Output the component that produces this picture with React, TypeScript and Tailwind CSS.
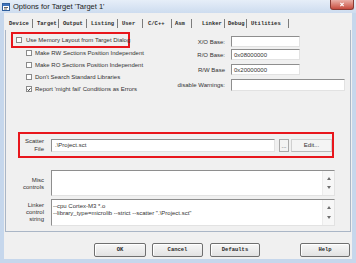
import React from 'react';

const tabs = [
  {label: 'Device', cls: 'w-[27px] pl-[3px]'},
  {label: 'Target', cls: 'w-[26px] pl-[4px]'},
  {label: 'Output', cls: 'w-[28px] pl-[4px]'},
  {label: 'Listing', cls: 'w-[31px] pl-[4px]'},
  {label: 'User', cls: 'w-[25px] pl-[4px]'},
  {label: 'C/C++', cls: 'w-[29px] pl-[5px]'},
  {label: 'Asm', cls: 'w-[20px] pl-[3px]'},
  {label: 'Linker', cls: 'w-[33px] pl-[10px]'},
  {label: 'Debug', cls: 'w-[22px] pl-[3px]'},
  {label: 'Utilities', cls: 'w-[42px] pl-[4px]'},
];

const sunken =
  'border border-t-[#8e8e8e] border-l-[#8e8e8e] border-r-[#e2e2e2] border-b-[#e2e2e2] bg-white';

function Check({checked}: {checked?: boolean}) {
  return (
    <span className="flex h-[6px] w-[6px] shrink-0 items-center justify-center border border-[#8a8a8a] bg-white">
      {checked && (
        <svg viewBox="0 0 6 6" className="h-[5px] w-[5px]">
          <path d="M0.8 3 L2.4 4.6 L5.2 1.2" stroke="#1a1a1a" strokeWidth="1.3" fill="none" />
        </svg>
      )}
    </span>
  );
}

function ScrollArrows() {
  return (
    <div className="flex w-[12px] shrink-0 flex-col items-center justify-between border-l border-[#ececec] bg-[#f7f7f7] py-[6px]">
      <svg viewBox="0 0 4 3" className="h-[3px] w-[4px]">
        <path d="M0 3 L2 0 L4 3 Z" fill="#6e6e6e" />
      </svg>
      <svg viewBox="0 0 4 3" className="h-[3px] w-[4px]">
        <path d="M0 0 L4 0 L2 3 Z" fill="#6e6e6e" />
      </svg>
    </div>
  );
}

function TitleBar() {
  return (
    <div className="flex h-[13px] shrink-0 items-start bg-gradient-to-b from-[#e6eef8] to-[#cddcef]">
      <svg viewBox="0 0 8 8" className="ml-[2px] mt-[3px] h-[8px] w-[8px]">
        <rect x="0.5" y="0.5" width="7" height="7" fill="#ffffff" stroke="#2f5f9e" />
        <rect x="1" y="1" width="6" height="2" fill="#3f74bd" />
        <path d="M2 4.5 H6 M2 6 H5" stroke="#444" strokeWidth="0.8" />
      </svg>
      <span className="ml-[3px] mt-[2px] text-[7.5px] leading-[9px] text-[#1c1c1c]">
        Options for Target 'Target 1'
      </span>
      <div className="ml-auto mr-[2px] flex h-[10px] w-[24px] items-center justify-center rounded-b-[3px] border border-t-0 border-[#8a3b34] bg-gradient-to-b from-[#eab0a8] to-[#c64a3e]">
        <svg viewBox="0 0 6 6" className="h-[5px] w-[6px]">
          <path d="M1 1 L5 5 M5 1 L1 5" stroke="#ffffff" strokeWidth="1.4" />
        </svg>
      </div>
    </div>
  );
}

function TabStrip() {
  return (
    <div className="flex h-[17px] shrink-0 items-end pl-[2px]">
      <div className="flex h-[13px] items-center font-['Liberation_Mono','Courier_New',monospace] text-[5.5px] font-bold text-[#2b2b2b]">
        {tabs.map((t) => (
          <div key={t.label} className={`flex h-full items-center justify-between ${t.cls}`}>
            <span className="leading-none">{t.label}</span>
            <span className="h-[9px] w-px shrink-0 bg-[#7c7c7c]" />
          </div>
        ))}
      </div>
    </div>
  );
}

function BaseRow({label, value, cls, field}: {label: string; value?: string; cls: string; field: string}) {
  return (
    <div className={`flex items-center ${cls}`}>
      <span className="w-[55px] text-right leading-none">{label}</span>
      <div className={`ml-[6px] flex h-full items-center pl-[2px] ${field} ${sunken}`}>
        <span className="leading-none">{value}</span>
      </div>
    </div>
  );
}

function Panel() {
  const rows = [
    {label: 'Make RW Sections Position Independent'},
    {label: 'Make RO Sections Position Independent'},
    {label: "Don't Search Standard Libraries"},
    {label: "Report 'might fail' Conditions as Errors", checked: true},
  ];
  return (
    <div className="mx-[1px] flex h-[202px] shrink-0 flex-col border-x border-b border-[#aab6c6] text-[6px]">
      <div className="flex h-[65px] shrink-0">
        <div className="flex w-[164px] flex-col">
          <div className="ml-[5px] mt-[2px] flex h-[16px] w-[119px] items-center border-2 border-[#e8161c] pl-[3px]">
            <Check />
            <span className="ml-[4px] whitespace-nowrap leading-none">Use Memory Layout from Target Dialog</span>
          </div>
          <div className="-mt-[1px] flex flex-col">
            {rows.map((r) => (
              <div key={r.label} className="flex h-[12px] items-center pl-[20px]">
                <Check checked={r.checked} />
                <span className="ml-[3px] whitespace-nowrap leading-none">{r.label}</span>
              </div>
            ))}
          </div>
        </div>
        <div className="flex flex-1 flex-col">
          <BaseRow label="X/O Base:" cls="mt-[6px] h-[11px]" field="w-[69px]" />
          <BaseRow label="R/O Base:" value="0x08000000" cls="mt-[2px] h-[11px]" field="w-[69px]" />
          <BaseRow label="R/W Base" value="0x20000000" cls="mt-[4px] h-[11px]" field="w-[69px]" />
          <BaseRow label="disable Warnings:" cls="mt-[4px] h-[12px]" field="w-[114px]" />
        </div>
      </div>

      <div className="ml-[12px] mt-[37px] flex h-[26px] w-[316px] shrink-0 items-center border-2 border-[#e8161c]">
        <div className="flex w-[24px] flex-col items-end leading-[8px]">
          <span>Scatter</span>
          <span>File</span>
        </div>
        <div className={`ml-[7px] flex h-[13px] w-[224px] items-center pl-[3px] ${sunken}`}>
          <span className="leading-none">.\Project.sct</span>
        </div>
        <div className="ml-[4px] flex h-[13px] w-[10px] items-end justify-center border border-[#a9a9a9] bg-[#f3f3f3] pb-[2px] leading-none">
          ...
        </div>
        <div className="ml-[2px] flex h-[13px] w-[41px] items-center justify-center border border-[#d0d0d0] border-b-[#b8b8b8] bg-[#f4f4f4] leading-none">
          Edit...
        </div>
      </div>

      <div className="mt-[12px] flex shrink-0">
        <div className="flex w-[38px] flex-col items-end pt-[7px] leading-[7px]">
          <span>Misc</span>
          <span>controls</span>
        </div>
        <div className={`ml-[7px] flex h-[26px] w-[284px] ${sunken}`}>
          <div className="flex-1" />
          <ScrollArrows />
        </div>
      </div>

      <div className="mt-[3px] flex shrink-0">
        <div className="flex w-[38px] flex-col items-end pt-[3px] leading-[7px]">
          <span>Linker</span>
          <span>control</span>
          <span>string</span>
        </div>
        <div className={`ml-[7px] flex h-[27px] w-[284px] ${sunken}`}>
          <div className="flex flex-1 flex-col pl-[1px] pt-[3px] leading-[7px] whitespace-nowrap">
            <span>--cpu Cortex-M3 *.o</span>
            <span>--library_type=microlib --strict --scatter ".\Project.sct"</span>
          </div>
          <ScrollArrows />
        </div>
      </div>
    </div>
  );
}

function Buttons() {
  const btn =
    'flex h-[14px] items-center justify-center rounded-[2px] border border-[#6f6f6f] bg-gradient-to-b from-[#f7f7f7] to-[#e2e2e2] shadow-[inset_1px_1px_0_#ffffff] leading-none';
  return (
    <div className="flex flex-1 items-start pl-[90px] pt-[11px] font-['Liberation_Mono','Courier_New',monospace] text-[5.5px] font-bold text-[#2b2b2b]">
      <div className={`w-[52px] ${btn}`}>OK</div>
      <div className={`ml-[6px] w-[51px] ${btn}`}>Cancel</div>
      <div className={`ml-[7px] w-[50px] ${btn}`}>Defaults</div>
      <div className={`ml-[40px] w-[50px] ${btn}`}>Help</div>
    </div>
  );
}

export default function App() {
  return (
    <div className="flex h-[263px] w-[356px] flex-col overflow-hidden bg-[#c6d7ec] font-['Liberation_Sans',Arial,sans-serif] text-[#333333]">
      <TitleBar />
      <div className="mx-[4px] mb-[4px] flex flex-1 flex-col bg-[#f0f0f0]">
        <TabStrip />
        <Panel />
        <Buttons />
      </div>
    </div>
  );
}
